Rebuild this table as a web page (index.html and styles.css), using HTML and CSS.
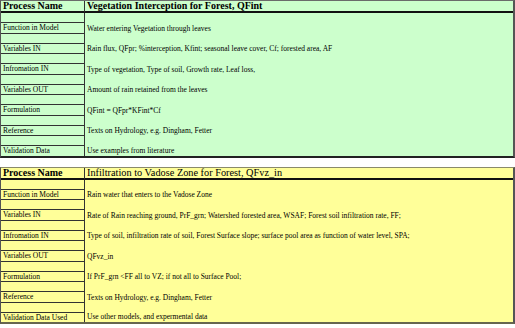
FILE: index.html
```html
<!DOCTYPE html>
<html>
<head>
<meta charset="utf-8">
<link rel="stylesheet" href="styles.css">
</head>
<body>
<div class="sheet">
  <div class="proc green">
    <div class="hname">Process Name</div>
    <div class="htitle bold">Vegetation Interception for Forest, QFint</div>
    <div class="lab"><span class="sp"></span><span class="tx">Function in Model</span></div>
    <div class="val">Water entering Vegetation through leaves</div>
    <div class="lab"><span class="sp"></span><span class="tx">Variables IN</span></div>
    <div class="val">Rain flux, QFpr; %interception, Kfint; seasonal leave cover, Cf; forested area, AF</div>
    <div class="lab"><span class="sp"></span><span class="tx">Infromation IN</span></div>
    <div class="val">Type of vegetation, Type of soil, Growth rate, Leaf loss,</div>
    <div class="lab"><span class="sp"></span><span class="tx">Variables OUT</span></div>
    <div class="val">Amount of rain retained from the leaves</div>
    <div class="lab"><span class="sp"></span><span class="tx">Formulation</span></div>
    <div class="val">QFint = QFpr*KFint*Cf</div>
    <div class="lab"><span class="sp"></span><span class="tx">Reference</span></div>
    <div class="val">Texts on Hydrology, e.g. Dingham, Fetter</div>
    <div class="lab last"><span class="sp"></span><span class="tx">Validation Data</span></div>
    <div class="val">Use examples from literature</div>
  </div>
  <div class="proc yellow">
    <div class="hname">Process Name</div>
    <div class="htitle">Infiltration to Vadose Zone for Forest, QFvz_in</div>
    <div class="lab"><span class="sp"></span><span class="tx">Function in Model</span></div>
    <div class="val">Rain water that enters to the Vadose Zone</div>
    <div class="lab"><span class="sp"></span><span class="tx">Variables IN</span></div>
    <div class="val">Rate of Rain reaching ground, PrF_grn; Watershed forested area, WSAF; Forest soil infiltration rate, FF;</div>
    <div class="lab"><span class="sp"></span><span class="tx">Infromation IN</span></div>
    <div class="val">Type of soil, infiltration rate of soil, Forest Surface slope; surface pool area as function of water level, SPA;</div>
    <div class="lab"><span class="sp"></span><span class="tx">Variables OUT</span></div>
    <div class="val">QFvz_in</div>
    <div class="lab"><span class="sp"></span><span class="tx">Formulation</span></div>
    <div class="val">If PrF_grn &lt;FF all to VZ; if not all to Surface Pool;</div>
    <div class="lab"><span class="sp"></span><span class="tx">Reference</span></div>
    <div class="val">Texts on Hydrology, e.g. Dingham, Fetter</div>
    <div class="lab last"><span class="sp"></span><span class="tx">Validation Data Used</span></div>
    <div class="val">Use other models, and expermental data</div>
  </div>
</div>
</body>
</html>
```
FILE: styles.css
```css
html, body {
  margin: 0;
  padding: 0;
  background: #ffffff;
}
.sheet {
  width: 515px;
  display: flex;
  flex-direction: column;
  gap: 9px;
  font-family: "Liberation Serif", "Times New Roman", serif;
  color: #000;
}
.proc {
  display: grid;
  grid-template-columns: 84px 1fr;
  border-top: 1px solid #6b6b6b;
  border-left: 1px solid #555;
  border-right: 2px solid #555;
  border-bottom: 2px solid #222;
}
.green { background: #ccffcc; }
.yellow { background: #ffff99; border-bottom-color: #66664f; border-top-color: #8a8a6a; }
.hname, .htitle {
  height: 10px;
  line-height: 10px;
  font-size: 10px;
  border-bottom: 2px solid #111;
  white-space: nowrap;
  overflow: hidden;
}
.hname {
  font-weight: bold;
  padding-left: 2px;
  border-right: 1px solid #333;
}
.htitle {
  padding-left: 2px;
  font-size: 10.3px;
}
.htitle.bold { font-weight: bold; font-size: 10px; }
.lab {
  display: flex;
  flex-direction: column;
  border-right: 1px solid #333;
  font-size: 7.5px;
}
.sp {
  height: 9px;
  border-bottom: 1px solid #333;
}
.tx {
  height: 9.5px;
  line-height: 10px;
  padding-left: 2px;
  border-bottom: 1px solid #333;
  white-space: nowrap;
}
.lab.last .tx { border-bottom: none; }
.val {
  display: flex;
  align-items: flex-end;
  font-size: 7.5px;
  line-height: 10px;
  padding-left: 2px;
  white-space: nowrap;
  overflow: hidden;
}
```
